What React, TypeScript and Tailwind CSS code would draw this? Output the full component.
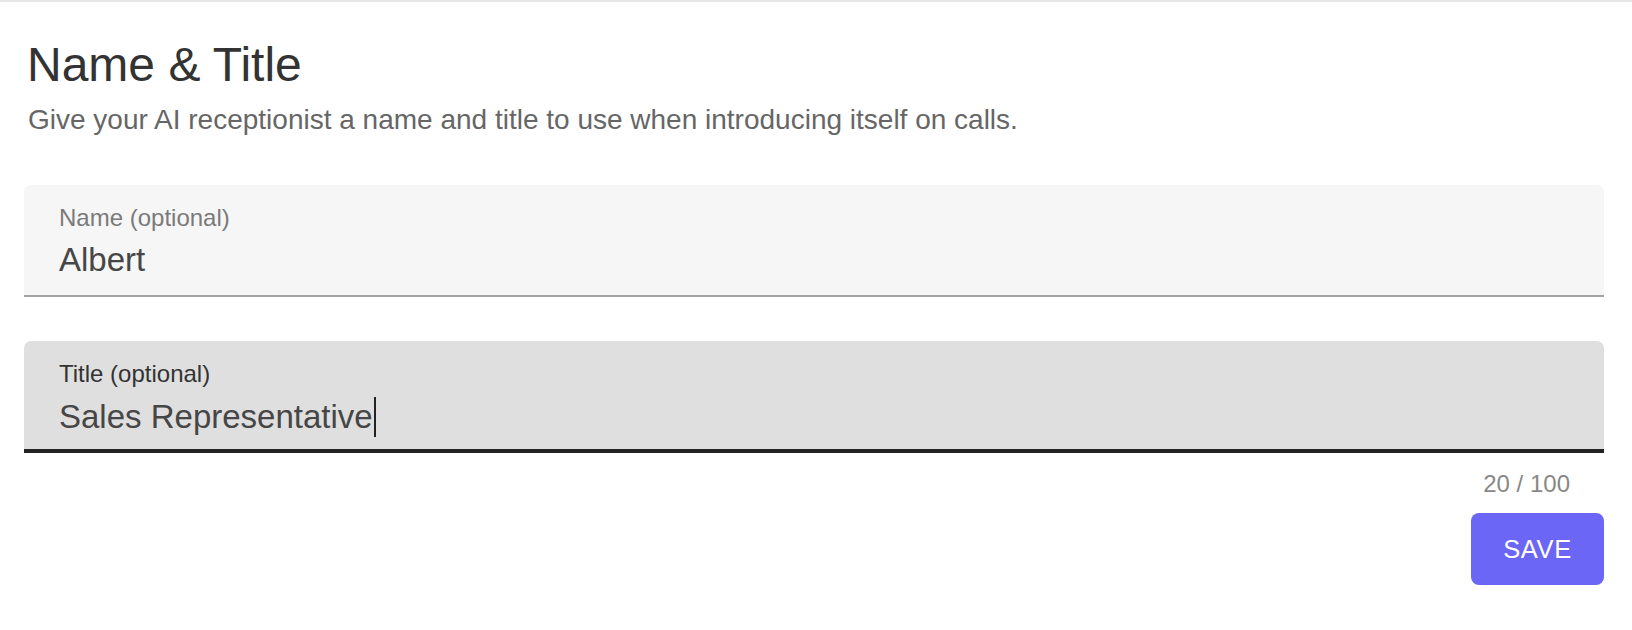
const font = { fontFamily: '"Liberation Sans", Arial, sans-serif' };

function Field({
  label,
  value,
  focused,
}: {
  label: string;
  value: string;
  focused?: boolean;
}) {
  return (
    <div
      className={`rounded-t-[7px] pl-[35px] pt-[20px] ${
        focused
          ? "h-[112px] border-b-4 border-[#222] bg-[#dfdfdf]"
          : "h-[112px] border-b-2 border-[#a3a3a3] bg-[#f6f6f6]"
      }`}
    >
      <div
        className={`text-[24px] leading-[26px] ${
          focused ? "text-[#333]" : "text-[#7a7a7a]"
        }`}
      >
        {label}
      </div>
      <div className="mt-[10px] flex items-center text-[33px] leading-[38px] text-[#464646]">
        <span>{value}</span>
        {focused && <span className="ml-[1px] inline-block h-[40px] w-[2px] bg-[#222]" />}
      </div>
    </div>
  );
}

export default function App() {
  return (
    <div className="min-h-screen border-t-2 border-[#e6e6e6] bg-white" style={font}>
      <div className="pl-[24px] pr-[28px] pt-[35px]">
        <h1 className="pl-[3px] text-[48px] leading-[56px] text-[#333]">Name &amp; Title</h1>
        <p className="mt-[11px] pl-[4px] text-[28px] leading-[32px] text-[#666]">
          Give your AI receptionist a name and title to use when introducing itself on calls.
        </p>

        <div className="mt-[49px] flex flex-col gap-[44px]">
          <Field label="Name (optional)" value="Albert" />
          <Field label="Title (optional)" value="Sales Representative" focused />
        </div>

        <div className="mt-[18px] pr-[34px] text-right text-[24px] leading-[26px] text-[#888]">
          20 / 100
        </div>

        <div className="mt-[16px] flex justify-end">
          <button
            type="button"
            className="h-[72px] w-[133px] rounded-[8px] bg-[#6b66f6] text-[25.5px] tracking-[0.6px] text-white"
          >
            SAVE
          </button>
        </div>
      </div>
    </div>
  );
}
